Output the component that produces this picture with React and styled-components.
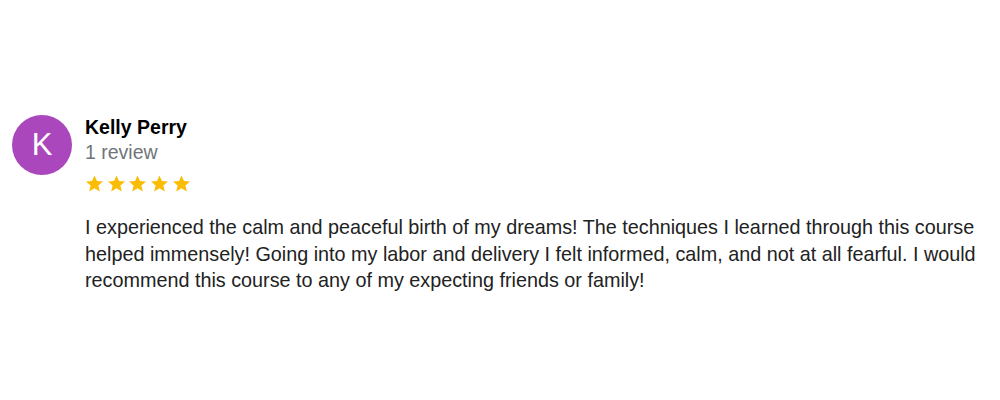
import React from 'react';
import styled, { createGlobalStyle } from 'styled-components';

const GlobalStyle = createGlobalStyle`
    html, body {
        margin: 0;
        padding: 0;
        background: #fff;
    }
    body {
        font-family: "Liberation Sans", Arial, sans-serif;
        color: #222;
    }
`

const Page = styled.div`
    width: 1000px;
    height: 400px;
    box-sizing: border-box;
    padding: 115px 0 0 12px;
`

const Review = styled.div`
    display: flex;
    gap: 13px;
    align-items: flex-start;
`

const Avatar = styled.div`
    width: 60px;
    height: 60px;
    border-radius: 50%;
    background: #ab47bc;
    color: #fff;
    display: flex;
    align-items: center;
    justify-content: center;
    font-size: 31px;
    flex-shrink: 0;
`

const Body = styled.div`
    display: flex;
    flex-direction: column;
`

const Name = styled.div`
    font-size: 19.5px;
    font-weight: bold;
    color: #000;
    line-height: 24px;
`

const Meta = styled.div`
    margin-top: 1px;
    font-size: 19.5px;
    color: #70757a;
    line-height: 24px;
`

const Stars = styled.div`
    display: flex;
    gap: 2.7px;
    margin-top: 10px;
`

const Text = styled.p`
    margin: 21px 0 0;
    width: 915px;
    font-size: 19.8px;
    line-height: 26.5px;
    color: #222;
`

const Star = () => (
    <svg width="19" height="19" viewBox="0 0 24 24">
        <path fill="#fbbc04" d="M12 1.8l3.1 7 7.6.7-5.8 5 1.8 7.5L12 18l-6.7 4 1.8-7.5-5.8-5 7.6-.7z" />
    </svg>
)

const App = () => {
    return (
        <Page>
            <GlobalStyle />
            <Review>
                <Avatar>K</Avatar>
                <Body>
                    <Name>Kelly Perry</Name>
                    <Meta>1 review</Meta>
                    <Stars>
                        {[0, 1, 2, 3, 4].map((i) => <Star key={i} />)}
                    </Stars>
                    <Text>
                        I experienced the calm and peaceful birth of my dreams! The techniques I learned through this course helped immensely! Going into my labor and delivery I felt informed, calm, and not at all fearful. I would recommend this course to any of my expecting friends or family!
                    </Text>
                </Body>
            </Review>
        </Page>
    );
};

export default App;
